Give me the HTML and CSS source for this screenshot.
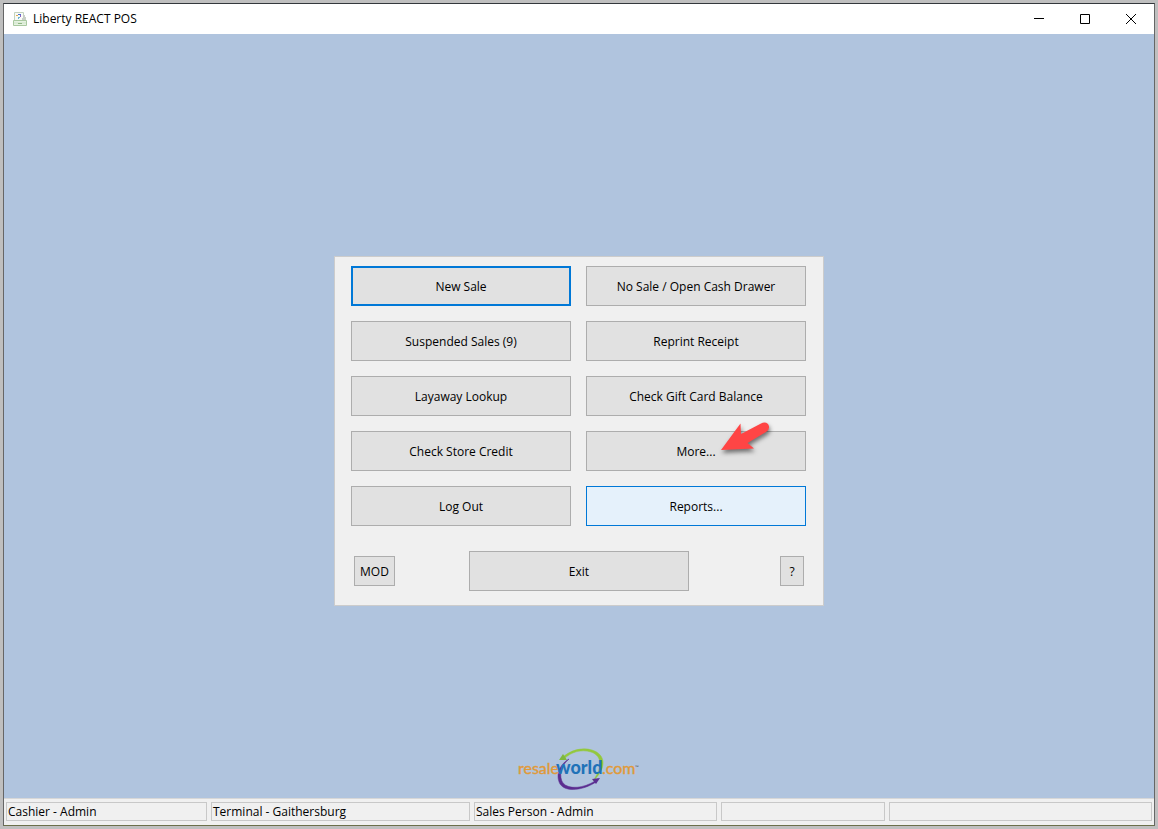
FILE: index.html
```html
<!DOCTYPE html>
<html lang="en">
<head>
  <meta charset="UTF-8">
  <title>Liberty REACT POS</title>
  <link rel="stylesheet" href="styles.css">
</head>
<body>
  <div class="window">
    <header class="titlebar">
      <svg class="app-icon" width="16" height="16" viewBox="0 0 16 16">
        <path d="M2.500 1.500h9v8h-9z" fill="#f9faf7" stroke="#c3d2be"/>
        <path d="M11 4h2v2h1v4h-4v-3h1z" fill="#c9cfc7"/>
        <path d="M1.500 9.500h13v5h-13z" fill="#e6f2e2" stroke="#a9c8a0"/>
        <path d="M2 12h12" stroke="#cfe3c9"/>
        <path d="M4 4h2v1h-2z" fill="#e0b04a"/>
        <path d="M6 3h3v1h-3z" fill="#4a6fd0"/>
        <path d="M8 4h1v2h-1z" fill="#8a5fc0"/>
        <path d="M6 6h2v1h-1v1h-1z" fill="#68b5cf"/>
        <path d="M6 12h4v1h-4z" fill="#8fb784"/>
      </svg>
      <h1>Liberty REACT POS</h1>
      <div class="window-controls">
        <button title="Minimize"><svg width="12" height="12" viewBox="0 0 12 12"><path d="M1 5.500h10"/></svg></button>
        <button title="Maximize"><svg width="12" height="12" viewBox="0 0 12 12"><path d="M1.500 1.500h9v9h-9z"/></svg></button>
        <button title="Close"><svg width="12" height="12" viewBox="0 0 12 12"><path d="M1 1l10 10M11 1L1 11"/></svg></button>
      </div>
    </header>

    <main class="desktop">
      <section class="menu">
        <div class="menu-grid">
          <button class="btn default" autofocus>New Sale</button>
          <button class="btn">No Sale / Open Cash Drawer</button>
          <button class="btn">Suspended Sales (9)</button>
          <button class="btn">Reprint Receipt</button>
          <button class="btn">Layaway Lookup</button>
          <button class="btn">Check Gift Card Balance</button>
          <button class="btn">Check Store Credit</button>
          <div class="more">
            <button class="btn">More...</button>
            <svg class="pointer" width="60" height="44" viewBox="0 0 60 44">
              <path d="M6 31L25.500 4.500L26 15L46 4.500Q50 2.500 53 5Q56 9.500 51 13L32.500 24L39 29.500Z"/>
            </svg>
          </div>
          <button class="btn">Log Out</button>
          <button class="btn hot">Reports...</button>
        </div>
        <div class="menu-footer">
          <button class="btn small">MOD</button>
          <button class="btn">Exit</button>
          <button class="btn small help">?</button>
        </div>
      </section>

      <svg class="logo" width="124" height="44" viewBox="0 0 124 44">
        <path d="M45 11C53 3 65 0 75 3C88 7 91 20 76 34C85 21 86 9 74 5C64 2 54 5 47 12Z" fill="#93c83d" stroke="#93c83d" stroke-width="0.500"/>
        <path d="M46 7L42 13L50 13Z" fill="#7fb840"/>
        <path d="M52 12C43 19 42 30 46 36C52 43 67 41 78 34L79 35C67 43 49 46 43 37C38 28 43 17 52 12Z" fill="#5b2d90" stroke="#5b2d90" stroke-width="0.500"/>
        <path d="M75 32L83 31L79 37Z" fill="#5b2d90"/>
        <text class="logo-orange" x="1" y="27">resale</text>
        <text class="logo-blue" x="39" y="27">world</text>
        <text class="logo-orange" x="85" y="27">.com</text>
        <text class="logo-tm" x="118" y="22">™</text>
      </svg>
    </main>

    <footer class="statusbar">
      <div>Cashier - Admin</div>
      <div>Terminal - Gaithersburg</div>
      <div>Sales Person - Admin</div>
      <div></div>
      <div></div>
    </footer>
  </div>
</body>
</html>
```
FILE: styles.css
```css
* { box-sizing: border-box; }
body { margin: 0; padding: 3px; height: 100vh; background: #bfbfbf; color: #000; font-family: "Open Sans", "Noto Sans", sans-serif; font-size: 12px; line-height: 16px; }
button { font: inherit; color: inherit; }

.window { display: flex; flex-direction: column; height: calc(100vh - 6px); border: 1px solid #666; border-top-color: #33373c; border-bottom-color: #6b6f4a; }

/* title bar */
.titlebar { display: flex; align-items: center; height: 30px; padding-left: 8px; background: #fff; }
.titlebar h1 { margin: 0 0 0 5px; font-size: 12px; font-weight: 400; }
.window-controls { display: flex; margin-left: auto; height: 100%; }
.window-controls button { display: flex; align-items: center; justify-content: center; width: 46px; padding: 0; background: none; border: none; }
.window-controls svg { fill: none; stroke: #000; }

/* main area */
.desktop { flex: 1; display: grid; grid-template-rows: 1fr auto 1fr; justify-items: center; padding: 37px 0 7px; background: #b0c4de; }
.menu { grid-row: 2; padding: 9px 17px 14px 16px; background: #f0f0f0; border: 1px solid #ccc; }
.menu-grid { display: grid; grid-template-columns: 220px 220px; gap: 15px; }
.menu-footer { display: flex; align-items: center; justify-content: space-between; margin-top: 25px; padding: 0 2px 0 3px; }
.btn { width: 220px; height: 40px; padding: 2px 0 0; background: #e1e1e1; border: 1px solid #adadad; }
.btn.default { border: 2px solid #0078d7; outline: none; }
.btn.hot { background: #e5f1fb; border-color: #0078d7; }
.btn.small { width: 41px; height: 30px; }
.btn.help { width: 24px; margin-left: 17px; }

.more { position: relative; }
.pointer { position: absolute; left: 129px; top: -12px; fill: #ff4545; filter: drop-shadow(1px 3px 2px rgba(0, 0, 0, 0.5)); pointer-events: none; }

.logo { grid-row: 3; align-self: end; }
.logo text { font-family: Lato, sans-serif; }
.logo .logo-orange { fill: #e09a3a; stroke: #e09a3a; stroke-width: 0.4px; font-size: 16px; }
.logo .logo-blue { fill: #1f72b8; font-size: 18px; font-weight: 900; }
.logo .logo-tm { fill: #555; font-size: 5px; }

/* status bar */
.statusbar { display: grid; grid-template-columns: 201px 259px 243px 164px 1fr; gap: 4px; padding: 3px 2px 4px; background: #f0f0f0; border-top: 1px solid #d7d7d7; }
.statusbar div { height: 19px; padding: 0 1px; line-height: 17px; border: 1px solid #c8c8c8; }
```
